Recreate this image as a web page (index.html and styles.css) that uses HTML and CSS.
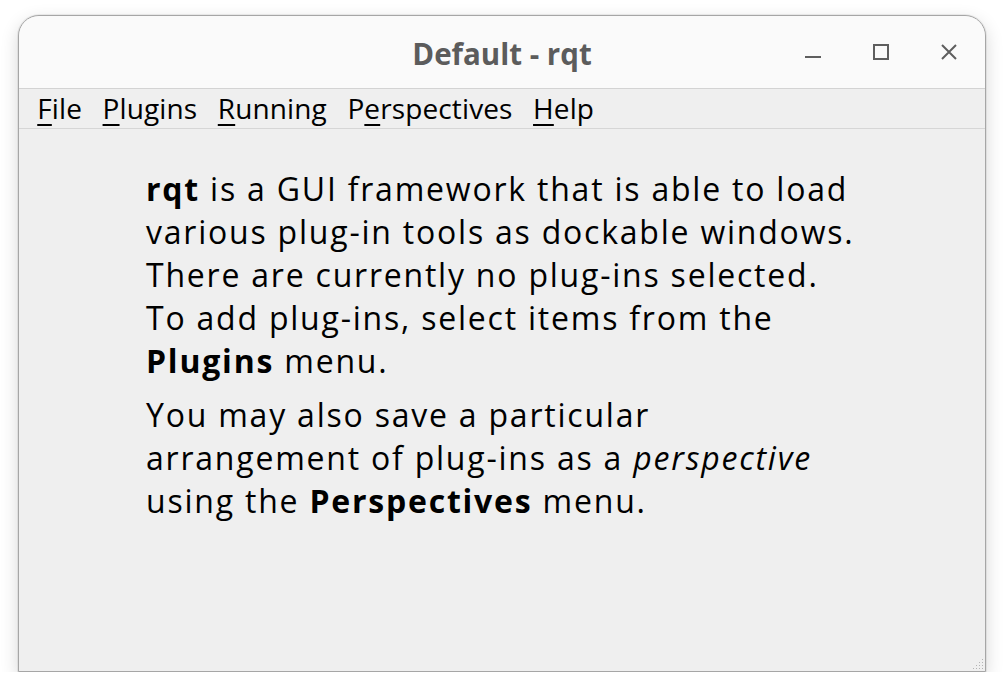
FILE: index.html
```html
<!DOCTYPE html>
<html>
<head>
<meta charset="utf-8">
<link rel="stylesheet" href="styles.css">
</head>
<body>
<div class="window">
  <div class="titlebar">
    <div class="spacer"></div>
    <div class="title">Default - rqt</div>
    <div class="controls">
      <svg class="btn" width="16" height="16" viewBox="0 0 16 16"><rect x="0" y="12" width="16" height="2" fill="#5e5e5e"/></svg>
      <svg class="btn" width="16" height="16" viewBox="0 0 16 16"><rect x="1" y="1" width="14" height="14" fill="none" stroke="#5e5e5e" stroke-width="2"/></svg>
      <svg class="btn" width="16" height="16" viewBox="0 0 16 16"><path d="M1 1L15 15M15 1L1 15" stroke="#5e5e5e" stroke-width="2" fill="none"/></svg>
    </div>
  </div>
  <div class="menubar">
    <span class="menu"><u>F</u>ile</span>
    <span class="menu"><u>P</u>lugins</span>
    <span class="menu"><u>R</u>unning</span>
    <span class="menu">P<u>e</u>rspectives</span>
    <span class="menu"><u>H</u>elp</span>
  </div>
  <div class="content">
    <p class="para"><b>rqt</b> is a GUI framework that is able to load<br>various plug-in tools as dockable windows.<br>There are currently no plug-ins selected.<br>To add plug-ins, select items from the<br><b>Plugins</b> menu.</p>
    <p class="para">You may also save a particular<br>arrangement of plug-ins as a <i>perspective</i><br>using the <b>Perspectives</b> menu.</p>
  </div>
  <svg class="grip" width="12" height="12" viewBox="0 0 12 12">
    <g fill="#b4b4b4">
      <rect x="10" y="1" width="1" height="1"/>
      <rect x="7" y="4" width="1" height="1"/><rect x="10" y="4" width="1" height="1"/>
      <rect x="4" y="7" width="1" height="1"/><rect x="7" y="7" width="1" height="1"/><rect x="10" y="7" width="1" height="1"/>
      <rect x="1" y="10" width="1" height="1"/><rect x="4" y="10" width="1" height="1"/><rect x="7" y="10" width="1" height="1"/><rect x="10" y="10" width="1" height="1"/>
    </g>
  </svg>
</div>
</body>
</html>
```
FILE: styles.css
```css
html, body {
  margin: 0;
  padding: 0;
  background: #ffffff;
}
body {
  padding: 15px 0 0 18px;
  font-family: "Open Sans", "Noto Sans", sans-serif;
}
.window {
  position: relative;
  box-sizing: border-box;
  width: 968px;
  height: 657px;
  border: 1px solid #a6a6a6;
  border-radius: 21px 21px 0 0;
  background: #efefef;
  box-shadow: 0 0 0 1px rgba(0,0,0,0.06), 0 6px 18px rgba(0,0,0,0.16);
  overflow: hidden;
}
.titlebar {
  height: 72px;
  background: #fafafa;
  border-bottom: 1px solid #d3d3d3;
  border-radius: 20px 20px 0 0;
  display: grid;
  grid-template-columns: 1fr auto 1fr;
  align-items: start;
}
.title {
  padding-top: 18px;
  font-size: 29.5px;
  font-weight: 700;
  color: #5c5c5c;
  line-height: 40px;
  white-space: nowrap;
}
.controls {
  justify-self: end;
  display: flex;
  gap: 52px;
  padding-top: 28px;
  padding-right: 28px;
}
.btn {
  display: block;
}
.menubar {
  height: 39px;
  border-bottom: 1px solid #d6d6d6;
  display: flex;
  padding-left: 8px;
  font-size: 28px;
  letter-spacing: 0.12px;
  line-height: 39px;
  color: #000;
}
.menu {
  padding: 0 10.25px;
  white-space: nowrap;
}
.menu u {
  text-decoration-thickness: 2px;
  text-underline-offset: 5px;
}
.content {
  padding: 38px 0 0 127px;
}
.para {
  margin: 0 0 11px 0;
  font-size: 32px;
  letter-spacing: 1.78px;
  line-height: 43px;
  color: #000;
  white-space: nowrap;
}
.grip {
  position: absolute;
  right: 1px;
  bottom: 1px;
}
```
